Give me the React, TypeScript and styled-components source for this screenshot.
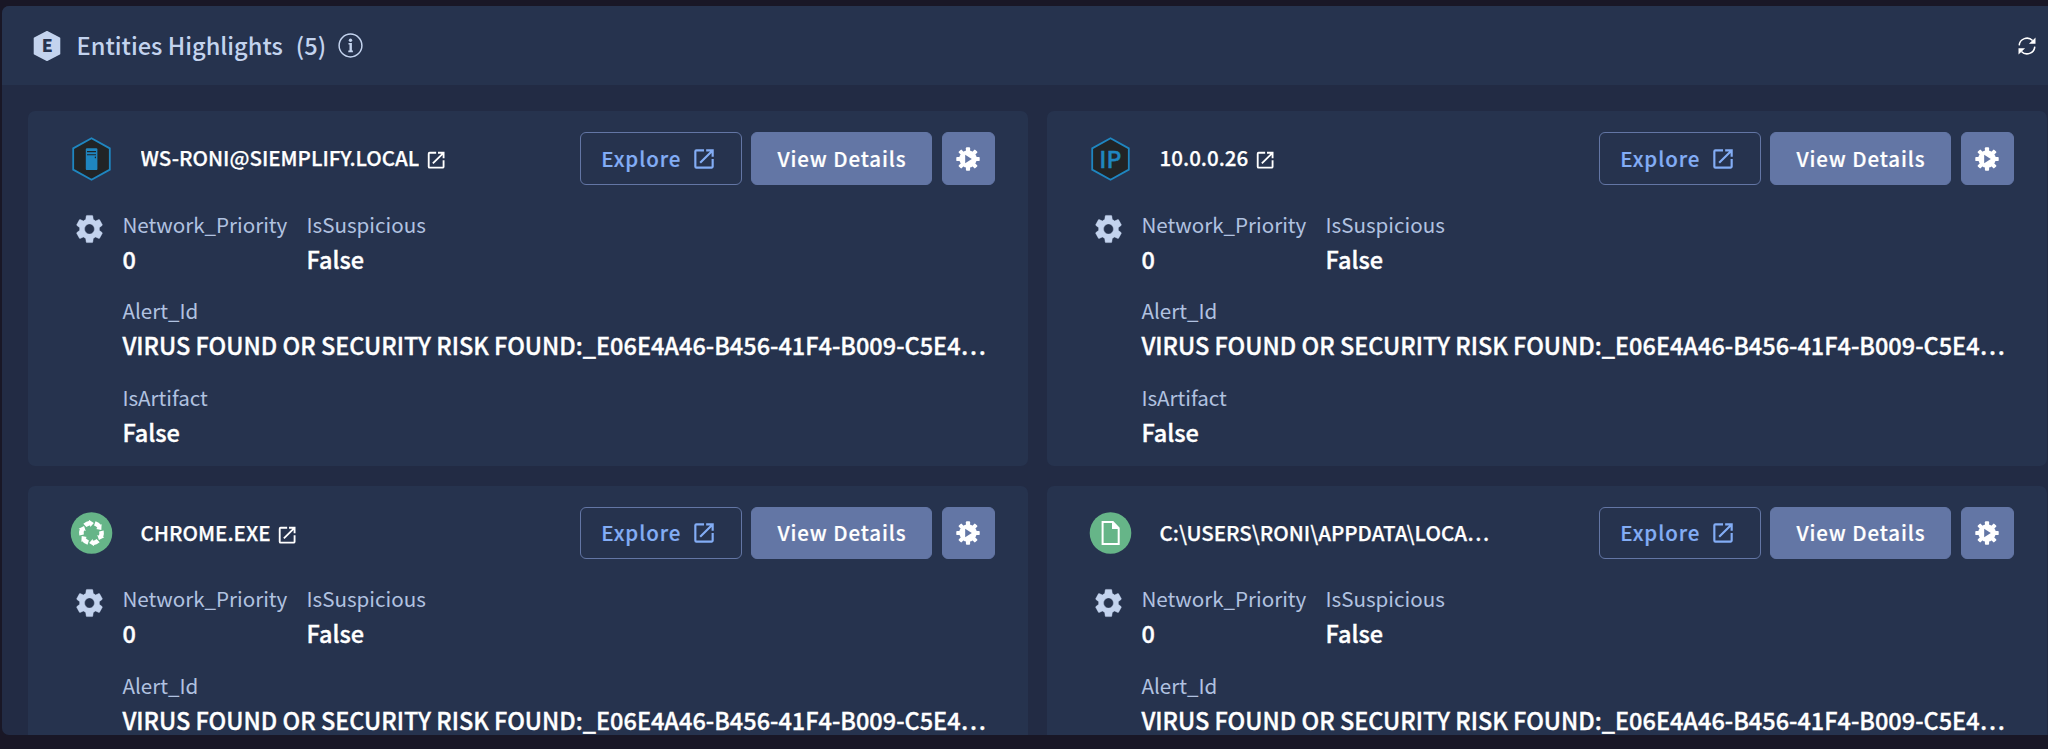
import React from 'react';
import styled, { createGlobalStyle } from 'styled-components';

const GlobalStyle = createGlobalStyle`
  * { box-sizing: border-box; }
  html, body { margin: 0; padding: 0; }
  body {
    background: #191726;
    color: #fff;
    font-family: "Noto Sans CJK SC", "Noto Sans", sans-serif;
    overflow: hidden;
  }
`;

const Page = styled.div`
  width: 100vw;
  height: 100vh;
  padding: 6px 0 14.5px 2px;
  overflow: hidden;
`;

const Panel = styled.section`
  display: flex;
  flex-direction: column;
  width: calc(100% + 20px);
  height: 100%;
  overflow: hidden;
  border-radius: 7px;
  background: #222b44;
`;

const PanelHeader = styled.header`
  display: flex;
  align-items: center;
  flex: none;
  height: 79px;
  padding: 0 32px 0 30.2px;
  background: #26334e;
  color: #c3d3ee;
`;

const PanelTitle = styled.h1`
  margin: -2px 0 0 14.4px;
  font-size: 23.6px;
  line-height: 32px;
  font-weight: 500;
  white-space: nowrap;
`;

const Count = styled.span`
  margin: -2px 11.8px 0 13px;
  font-size: 23.6px;
  line-height: 32px;
  font-weight: 500;
`;

const RefreshButton = styled.button`
  display: flex;
  margin: 0 0 0 auto;
  padding: 0;
  border: 0;
  background: none;
  color: #fff;
`;

const CardGrid = styled.div`
  display: grid;
  grid-template-columns: 999.5px 999.5px;
  grid-auto-rows: 355px;
  gap: 19.5px;
  padding: 26px;
`;

const Card = styled.article`
  padding: 21.4px 32.7px 0 42px;
  border-radius: 7px;
  background: #26334e;
`;

const CardHead = styled.div`
  display: flex;
  align-items: center;
  height: 52.6px;
`;

const EntityIcon = styled.div`
  display: flex;
  flex: none;
  width: 43px;
  margin-right: 27.6px;
`;

const EntityName = styled.h2`
  margin: -2.4px 0 0;
  max-width: 331px;
  overflow: hidden;
  text-overflow: ellipsis;
  white-space: nowrap;
  font-size: 20.55px;
  line-height: 30px;
  font-weight: 500;
  -webkit-text-stroke: 0.25px currentColor;
`;

const NameLink = styled.a`
  display: flex;
  margin: 3px 0 0 5.8px;
  color: #fff;
`;

const Actions = styled.div`
  display: flex;
  gap: 9.4px;
  margin-left: auto;
`;

const Button = styled.button<{ $kind: 'outline' | 'solid' | 'icon' }>`
  display: flex;
  align-items: center;
  justify-content: center;
  gap: 10px;
  width: ${p => ({ outline: '162px', solid: '181px', icon: '53px' })[p.$kind]};
  height: 52.6px;
  padding: ${p => (p.$kind === 'outline' ? '0 3.6px 0 0' : '0')};
  border: 1.5px solid #6376a5;
  border-radius: 6px;
  background: ${p => (p.$kind === 'outline' ? 'transparent' : '#6376a5')};
  color: ${p => (p.$kind === 'outline' ? '#83adf5' : '#fff')};
  font-family: inherit;
  font-size: 20.5px;
  line-height: 30px;
  font-weight: 500;
  letter-spacing: 0.9px;
  -webkit-text-stroke: 0.2px currentColor;
`;

const ButtonText = styled.span`
  padding-bottom: 2px;
`;

const CardBody = styled.div`
  display: flex;
  padding: 21.6px 0 0 3px;
`;

const BodyIcon = styled.div`
  flex: none;
  width: 49.4px;
  padding-top: 5px;
  color: #c3d3ee;
`;

const FieldRows = styled.div`
  display: flex;
  flex-direction: column;
  gap: 16.8px;
  min-width: 0;
`;

const FieldRow = styled.dl`
  display: flex;
  gap: 19.2px;
  margin: 0;
`;

const Field = styled.div`
  min-width: 0;
`;

const Label = styled.dt`
  font-size: 20.6px;
  line-height: 34px;
  color: #b1c2e0;
  white-space: nowrap;
`;

const Value = styled.dd`
  margin: 0;
  font-size: 23.5px;
  line-height: 36px;
  font-weight: 500;
  -webkit-text-stroke: 0.35px currentColor;
  white-space: nowrap;
`;

const Glyph = styled.svg`
  display: block;
  flex: none;
`;

const OpenIcon = ({ size }: { size: number }) => (
  <Glyph width={size} height={size} viewBox="0 0 24 24" fill="currentColor">
    <path d="M19 19H5V5h7V3H5a2 2 0 0 0-2 2v14a2 2 0 0 0 2 2h14c1.1 0 2-.9 2-2v-7h-2v7zM14 3v2h3.59l-9.83 9.83 1.41 1.41L19 6.41V10h2V3h-7z" />
  </Glyph>
);

const SettingsIcon = () => (
  <Glyph width="33" height="34" viewBox="0 0 24 24" preserveAspectRatio="none" fill="currentColor">
    <path stroke="currentColor" strokeWidth="0.3" d="M19.14 12.94c.04-.3.06-.61.06-.94 0-.32-.02-.64-.07-.94l2.03-1.58a.49.49 0 0 0 .12-.61l-1.92-3.32a.488.488 0 0 0-.59-.22l-2.39.96c-.5-.38-1.03-.7-1.62-.94l-.36-2.54a.484.484 0 0 0-.48-.41h-3.84c-.24 0-.43.17-.47.41l-.36 2.54c-.59.24-1.13.57-1.62.94l-2.39-.96c-.22-.08-.47 0-.59.22L2.74 8.87c-.12.21-.08.47.12.61l2.03 1.58c-.05.3-.09.63-.09.94s.02.64.07.94l-2.03 1.58a.49.49 0 0 0-.12.61l1.92 3.32c.12.22.37.29.59.22l2.39-.96c.5.38 1.03.7 1.62.94l.36 2.54c.05.24.24.41.48.41h3.84c.24 0 .44-.17.47-.41l.36-2.54c.59-.24 1.13-.56 1.62-.94l2.39.96c.22.08.47 0 .59-.22l1.92-3.32c.12-.22.07-.47-.12-.61l-2.01-1.58zM12 15.6c-1.98 0-3.6-1.62-3.6-3.6s1.62-3.6 3.6-3.6 3.6 1.62 3.6 3.6-1.62 3.6-3.6 3.6z" />
  </Glyph>
);

const teeth = [0, 45, 90, 135, 180, 225, 270, 315];

const RunIcon = () => (
  <Glyph width="24" height="24" viewBox="0 0 24 24">
    <circle cx="12" cy="12" r="8.7" fill="#fff" />
    {teeth.map(a => (
      <rect key={a} x="9.9" y="0.3" width="4.2" height="5" rx="0.9" fill="#fff" transform={`rotate(${a} 12 12)`} />
    ))}
    <path d="M9.2 7.8v8.4l6.6-4.2z" fill="#6376a5" />
  </Glyph>
);

const BadgeIcon = () => (
  <Glyph width="30" height="32" viewBox="0 0 30 32">
    <path d="M15 1.7 27.5 8.3V23.7L15 30.3 2.5 23.7V8.3z" fill="#c3d3ee" stroke="#c3d3ee" strokeWidth="1.6" strokeLinejoin="round" />
    <text x="15.2" y="22.4" textAnchor="middle" fontSize="17.5" fontWeight="900" fontFamily="Noto Sans CJK SC" fill="#26334e">E</text>
  </Glyph>
);

const InfoIcon = () => (
  <Glyph width="25" height="25" viewBox="0 0 25 25">
    <circle cx="12.5" cy="12.5" r="11.4" fill="none" stroke="#c3d3ee" strokeWidth="1.5" />
    <circle cx="12.5" cy="7.2" r="1.7" fill="#c3d3ee" />
    <path d="M10.5 10h3.4v7.6h1v1.6h-4.6v-1.6h1.2v-6h-1z" fill="#c3d3ee" />
  </Glyph>
);

const RefreshIcon = () => (
  <Glyph width="18" height="18" viewBox="0 0 18 18">
    <path d="M1.2 8.4A7.8 7.8 0 0 1 14.6 3.6M16.8 9.6A7.8 7.8 0 0 1 3.4 14.4" fill="none" stroke="#fff" strokeWidth="1.5" />
    <path d="M17.5.6v6.2h-6.6zM.5 17.4v-6.2h6.6z" fill="#fff" />
  </Glyph>
);

const Hexagon = ({ children }: { children: React.ReactNode }) => (
  <Glyph width="43" height="44" viewBox="0 0 43 44">
    <path d="M21.5 1.2 39.8 11.4V32.6L21.5 42.8 3.2 32.6V11.4z" fill="#212426" stroke="#1f86c0" strokeWidth="1.8" />
    {children}
  </Glyph>
);

const HostIcon = () => (
  <Hexagon>
    <rect x="15.8" y="11.3" width="11.6" height="21.8" rx="1.2" fill="#1f86c0" />
    <path d="M17 14.6h9M17 17.8h9" stroke="#212426" strokeWidth="1.1" />
    <rect x="24.8" y="19.6" width="1.2" height="1.6" fill="#212426" />
  </Hexagon>
);

const IpIcon = () => (
  <Hexagon>
    <text x="21.3" y="30.6" textAnchor="middle" fontSize="23" fontWeight="500" fontFamily="Noto Sans CJK SC" fill="#1f86c0" stroke="#1f86c0" strokeWidth="0.4">IP</text>
  </Hexagon>
);

const arrows = [0, 60, 120, 180, 240, 300];

const ProcessIcon = () => (
  <Glyph width="43" height="42" viewBox="0 0 43 42">
    <circle cx="21.5" cy="21" r="20.8" fill="#66b588" />
    {arrows.map(a => (
      <g key={a} transform={`rotate(${a - 14} 21.5 21)`}>
        <path d="M16.9 12A10.1 10.1 0 0 1 22.6 10.9" fill="none" stroke="#fff" strokeWidth="4.6" />
        <path d="M22.1 7.5 26.2 11.9 21.9 14.9z" fill="#fff" />
      </g>
    ))}
  </Glyph>
);

const FileIcon = () => (
  <Glyph width="43" height="42" viewBox="0 0 43 42">
    <circle cx="21.5" cy="21" r="20.8" fill="#66b588" />
    <path d="M13.6 9.9h10.2l5.9 6.2v16H13.6z" fill="none" stroke="#fff" strokeWidth="2" />
    <path d="M23 9.6v7.4h7z" fill="#fff" />
  </Glyph>
);

interface Entity {
  name: string;
  icon: React.ReactNode;
  link: boolean;
}

const entities: Entity[] = [
  { name: 'WS-RONI@SIEMPLIFY.LOCAL', icon: <HostIcon />, link: true },
  { name: '10.0.0.26', icon: <IpIcon />, link: true },
  { name: 'CHROME.EXE', icon: <ProcessIcon />, link: true },
  { name: 'C:\\USERS\\RONI\\APPDATA\\LOCA…', icon: <FileIcon />, link: false },
];

const rows = [
  [
    { label: 'Network_Priority', value: '0' },
    { label: 'IsSuspicious', value: 'False' },
  ],
  [{ label: 'Alert_Id', value: 'VIRUS FOUND OR SECURITY RISK FOUND:_E06E4A46-B456-41F4-B009-C5E4…' }],
  [{ label: 'IsArtifact', value: 'False' }],
];

const EntityCard = ({ name, icon, link }: Entity) => (
  <Card>
    <CardHead>
      <EntityIcon>{icon}</EntityIcon>
      <EntityName>{name}</EntityName>
      {link && <NameLink><OpenIcon size={22.3} /></NameLink>}
      <Actions>
        <Button $kind="outline"><ButtonText>Explore</ButtonText><OpenIcon size={26} /></Button>
        <Button $kind="solid"><ButtonText>View Details</ButtonText></Button>
        <Button $kind="icon"><RunIcon /></Button>
      </Actions>
    </CardHead>
    <CardBody>
      <BodyIcon><SettingsIcon /></BodyIcon>
      <FieldRows>
        {rows.map((row, i) => (
          <FieldRow key={i}>
            {row.map(f => (
              <Field key={f.label}>
                <Label>{f.label}</Label>
                <Value>{f.value}</Value>
              </Field>
            ))}
          </FieldRow>
        ))}
      </FieldRows>
    </CardBody>
  </Card>
);

export default function App() {
  return (
    <>
      <GlobalStyle />
      <Page>
        <Panel>
          <PanelHeader>
            <BadgeIcon />
            <PanelTitle>Entities Highlights</PanelTitle>
            <Count>(5)</Count>
            <InfoIcon />
            <RefreshButton><RefreshIcon /></RefreshButton>
          </PanelHeader>
          <CardGrid>
            {entities.map(e => <EntityCard key={e.name} {...e} />)}
          </CardGrid>
        </Panel>
      </Page>
    </>
  );
}
